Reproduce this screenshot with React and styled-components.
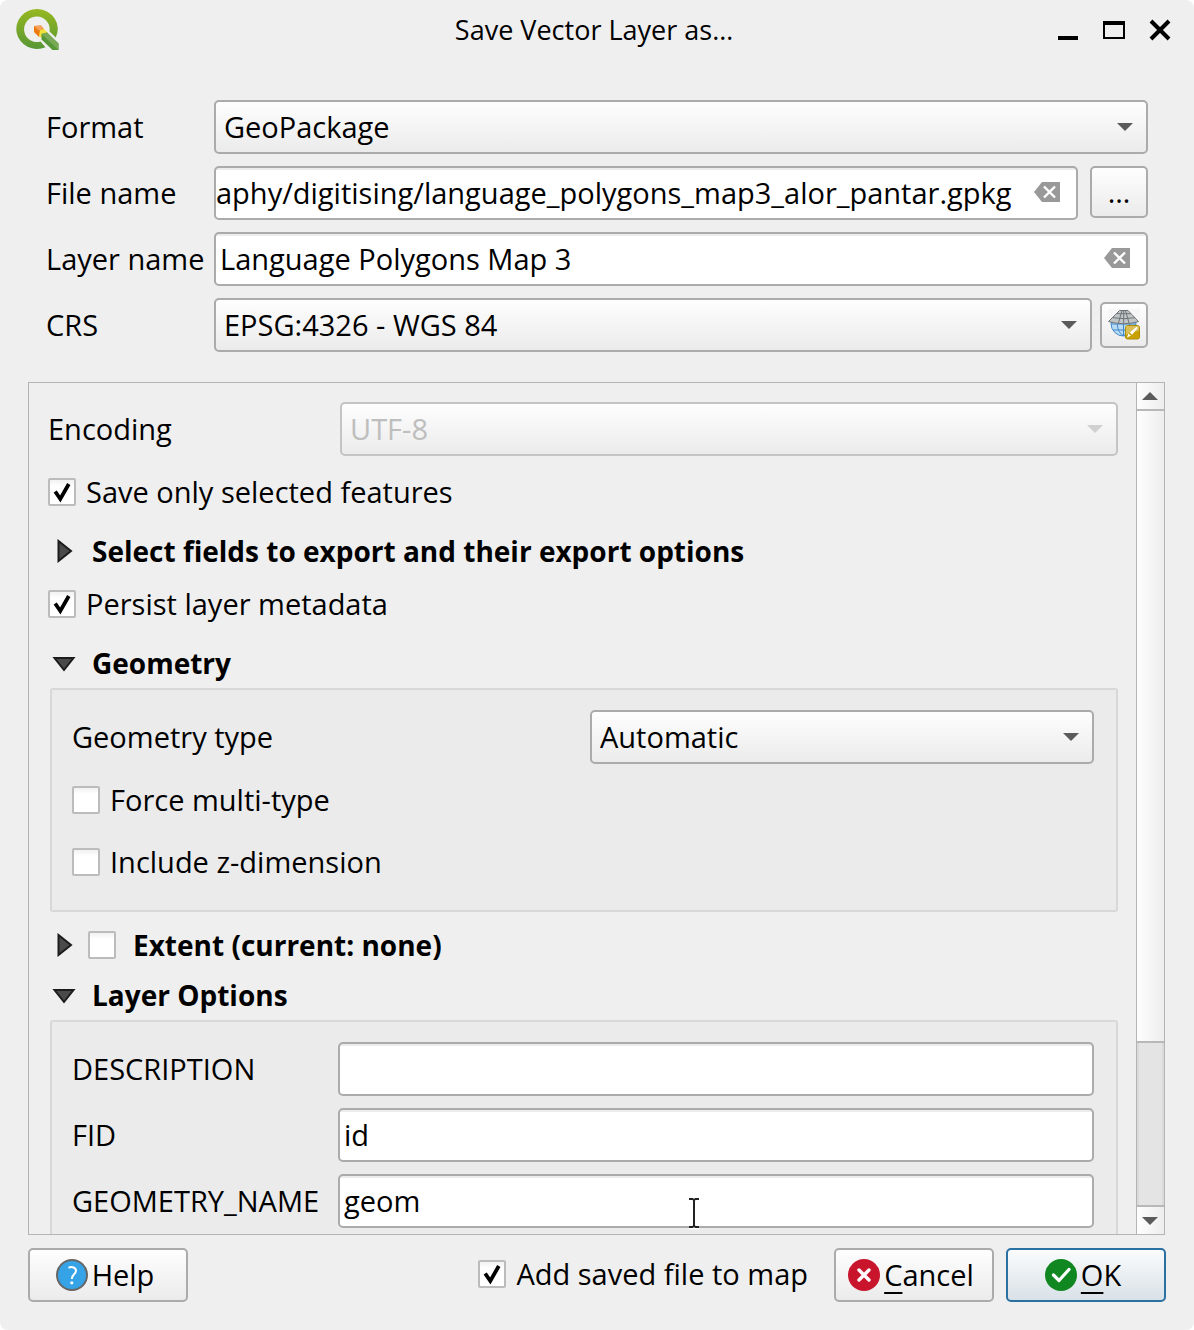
import React from 'react';
import styled, { createGlobalStyle, css } from 'styled-components';

const GlobalStyle = createGlobalStyle`
  *, *::before, *::after { box-sizing: border-box; }
  body { margin: 0; background: #fff; }
  body, button, input, select {
    font-family: "Open Sans", "Noto Sans", sans-serif;
    font-size: 29px;
    line-height: 40px;
    color: #000;
  }
`;

const raised = css`
  background: linear-gradient(#fefefe, #ebebeb);
  border: 2px solid #ababab;
  border-radius: 5px;
`;

const Window = styled.main`
  display: flex;
  flex-direction: column;
  height: 100vh;
  min-height: 600px;
  padding-bottom: 28px;
  background: #efefef;
  border-radius: 8px;
  overflow: hidden;
`;

const TitleBar = styled.header`
  display: grid;
  grid-template-columns: 1fr auto 1fr;
  align-items: center;
  height: 60px;
  padding: 0 22px 0 16px;
`;

const Title = styled.h1`
  margin: 0;
  font-size: 27px;
  font-weight: 400;
  line-height: 40px;
`;

const WindowButtons = styled.div`
  display: flex;
  justify-content: flex-end;
  gap: 22px;
`;

const WindowButton = styled.button`
  display: flex;
  width: 24px;
  height: 24px;
  padding: 0;
  border: 0;
  background: none;
`;

const TopForm = styled.section`
  display: grid;
  grid-template-columns: 156px 1fr;
  gap: 12px;
  padding: 40px 46px 30px;
`;

const Label = styled.label`
  align-self: center;
  white-space: nowrap;
`;

const FieldRow = styled.div`
  display: flex;
  align-items: ${p => p.$align || 'center'};
  gap: ${p => p.$gap}px;
`;

const SelectBox = styled.div`
  display: grid;
  flex: 1;
  align-items: center;
  color: ${p => (p.$disabled ? '#d0d0d0' : '#5b5b5b')};

  & > * { grid-area: 1 / 1; }
  & > svg { justify-self: end; margin-right: 15px; pointer-events: none; }
`;

const SelectControl = styled.select`
  ${raised}
  appearance: none;
  width: 100%;
  height: 54px;
  padding: 0 44px 0 8px;

  &:disabled { color: #bebebe; border-color: #c4c4c4; opacity: 1; }
`;

const InputBox = styled.div`
  display: flex;
  flex: 1;
  align-items: center;
  position: relative;
  height: 54px;
  padding: 0 ${p => (p.$clearable ? 14 : 4)}px 2px ${p => (p.$scrolled ? 0 : 4)}px;
  background: linear-gradient(#ececec 2px, #fff 2px);
  border: 2px solid #ababab;
  border-radius: 5px;
`;

const TextInput = styled.input`
  flex: 1;
  min-width: 0;
  height: 48px;
  padding: 0;
  border: 0;
  outline: 0;
  background: none;
`;

const ClearButton = styled.button`
  display: flex;
  padding: 0;
  border: 0;
  background: none;
`;

const BrowseButton = styled.button`
  ${raised}
  width: 58px;
  height: 52px;
  padding: 0;
`;

const CrsButton = styled.button`
  ${raised}
  display: flex;
  align-items: center;
  justify-content: center;
  width: 48px;
  height: 46px;
  padding: 0;
`;

const Panel = styled.section`
  display: flex;
  flex: 1;
  min-height: 0;
  margin: 0 29px 0 28px;
  border: 1px solid #b4b4b4;
`;

const PanelContent = styled.div`
  flex: 1;
  min-width: 0;
  padding: 19px 18px 0 19px;
  overflow: hidden;
`;

const OptionRow = styled.div`
  display: grid;
  grid-template-columns: ${p => p.$columns};
  align-items: center;
  margin-bottom: 8px;
`;

const CheckRow = styled.label`
  display: flex;
  align-items: center;
  gap: 10px;
  height: ${p => (p.$compact ? 40 : 56)}px;
  margin-bottom: ${p => (p.$compact ? 2 : 6)}px;
`;

const CheckFrame = styled.span`
  display: grid;
  flex: none;
  width: 28px;
  height: 28px;

  & > * { grid-area: 1 / 1; }
  & > svg { pointer-events: none; visibility: hidden; }
  & > input:checked + svg { visibility: visible; }
`;

const CheckInput = styled.input`
  appearance: none;
  width: 28px;
  height: 28px;
  margin: 0;
  background: linear-gradient(#f1f1f1, #fff 6px);
  border: 2px solid #bcbcbc;
  border-radius: 2px;
`;

const Heading = styled.div`
  display: flex;
  align-items: center;
  height: 50px;
  margin-top: ${p => (p.$spaced ? 8 : 0)}px;
`;

const Disclosure = styled.button`
  display: flex;
  margin-left: 4px;
  margin-right: ${p => (p.$tight ? 12 : 16)}px;
  padding: 0;
  border: 0;
  background: none;
`;

const HeadingText = styled.h2`
  margin: 0;
  font-size: 28px;
  font-weight: 700;
  line-height: 40px;
  white-space: nowrap;
`;

const HeadingLabel = styled.label`
  display: flex;
  align-items: center;
  gap: 17px;
`;

const Group = styled.div`
  margin-left: 2px;
  padding: 20px 22px 14px 20px;
  background: #ebebeb;
  border: 2px solid #d8d8d8;
  border-radius: 3px;
`;

const LayerFields = styled.div`
  display: grid;
  grid-template-columns: 254px 1fr;
  gap: 12px;
`;

const ScrollBar = styled.div`
  display: flex;
  flex-direction: column;
  flex: none;
  width: 28px;
  border-left: 1px solid #b4b4b4;
  background: #e4e4e4;
`;

const ScrollButton = styled.button`
  display: flex;
  flex: none;
  align-items: center;
  justify-content: center;
  height: ${p => (p.$down ? 29 : 28)}px;
  padding: 0 2px 0 0;
  border: 0;
  border-${p => (p.$down ? 'top' : 'bottom')}: 2px solid #b8b8b8;
  background: linear-gradient(90deg, #fefefe, #ededed);
  color: #5b5b5b;
`;

const ScrollTrack = styled.div`
  display: flex;
  flex-direction: column;
  flex: 1;
  border: solid #dadada;
  border-width: 0 2px;
`;

const ScrollThumb = styled.div`
  flex: 0 0 79.6%;
  margin: 0 -2px;
  background: linear-gradient(90deg, #fefefe, #ededed);
  border-bottom: 2px solid #b8b8b8;
`;

const Footer = styled.footer`
  display: flex;
  align-items: center;
  margin: 13px 28px 0;
`;

const FooterActions = styled.div`
  display: flex;
  align-items: center;
  gap: 12px;
  margin-left: auto;
`;

const ActionButton = styled.button`
  ${raised}
  display: flex;
  align-items: center;
  justify-content: center;
  gap: 4px;
  width: 160px;
  height: 54px;
  padding: 0 6px 0 0;
  ${p => p.$primary && css`
    border-color: #2a70a0;
    background: linear-gradient(#fafcfd, #d9e1e7);
  `}
`;

const Mnemonic = styled.span`
  text-decoration: underline;
  text-decoration-thickness: 2px;
  text-underline-offset: 6px;
`;

const FooterCheck = styled.div`
  margin-right: 14px;
`;

const TextCursor = styled.svg`
  position: absolute;
  left: 46%;
  top: 20px;
  pointer-events: none;
`;

const Arrow = ({ up }) => (
  <svg width="16" height="8" viewBox="0 0 16 8" aria-hidden="true">
    <path d={up ? 'M0 8L8 0L16 8Z' : 'M0 0H16L8 8Z'} fill="currentColor" />
  </svg>
);

const Triangle = ({ open }) => (
  <svg width="24" height="24" viewBox="0 0 24 24" aria-hidden="true">
    <path d={open ? 'M2.500 7H21.500L12 19Z' : 'M6.500 2V22L19 12Z'} fill="#4a4a4a" stroke="#1c1c1c" strokeWidth="2" />
  </svg>
);

const Check = ({ id, checked }) => (
  <CheckFrame>
    <CheckInput type="checkbox" id={id} defaultChecked={checked} />
    <svg width="28" height="28" viewBox="0 0 28 28" aria-hidden="true">
      <path d="M7.200 13.500L12.300 21L20.800 6" fill="none" stroke="#000" strokeWidth="3.800" />
    </svg>
  </CheckFrame>
);

const Select = ({ id, value, disabled }) => (
  <SelectBox $disabled={disabled}>
    <SelectControl id={id} disabled={disabled} defaultValue={value}>
      <option>{value}</option>
    </SelectControl>
    <Arrow />
  </SelectBox>
);

const Field = ({ id, value, clearable, scrolled, children }) => (
  <InputBox $clearable={clearable} $scrolled={scrolled}>
    <TextInput id={id} type="text" defaultValue={value} />
    {clearable && (
      <ClearButton type="button" aria-label="Clear text">
        <svg width="28" height="20" viewBox="0 0 28 20">
          <path d="M0 10L8 0H26V20H8Z" fill="#999" />
          <path d="M10 4.500L21 15.500M21 4.500L10 15.500" stroke="#fff" strokeWidth="2.400" />
        </svg>
      </ClearButton>
    )}
    {children}
  </InputBox>
);

const QgisLogo = () => (
  <svg width="44" height="44" viewBox="0 0 44 44" aria-hidden="true">
    <defs>
      <linearGradient id="ring" x1="0" y1="0" x2="0" y2="1">
        <stop offset="0" stopColor="#97b81f" />
        <stop offset="1" stopColor="#579736" />
      </linearGradient>
    </defs>
    <path fillRule="evenodd" fill="url(#ring)" d="M21.500 1A20.800 20 0 1 0 29.500 39.300L24.500 33.600A12.800 12.800 0 1 1 33.500 23.500L39.800 29.500A20.800 20 0 0 0 21.500 1Z" />
    <path d="M18 18L25 17.500L28 21.500L23 29L18 24Z" fill="#ee7913" />
    <path d="M18 18L25 17.500L28 20.500L23 22.500Z" fill="#f6a15c" />
    <path d="M24 22L28 21L32 25L27 31L23 28Z" fill="#f3e03b" />
    <path d="M25.500 26L31 24.500L42.500 35.500V42H36.500L25.500 31.500Z" fill="#579736" />
    <path d="M25.500 26L31 24.500L42.500 35.500V42Z" fill="#77a957" />
  </svg>
);

const GlobeIcon = () => (
  <svg width="32" height="32" viewBox="0 0 32 32" aria-hidden="true">
    <circle cx="15.500" cy="14.500" r="12.500" fill="#b9dcf6" stroke="#3f86c6" />
    <path d="M3 15H28M15.500 14V27M5 21H26M9.500 14C9 19 11 24 15 26.500M21.500 14C22 19 20 24 16 26.500" fill="none" stroke="#3f86c6" />
    <path d="M0 0H32V11H0Z" fill="#f6f6f6" />
    <path d="M11.500 1.500H20L30.500 12.500Q16 17 .5 12.500Z" fill="#c2c5c6" stroke="#6f7678" />
    <path d="M9 4.700H23M5 8.700Q16 10.700 27 8.700M14 1.500L10.500 14M17.500 1.500L21 14M15.700 1.500V14.500" fill="none" stroke="#6f7678" />
    <rect x="17.500" y="16.500" width="14" height="13.500" rx="2" fill="#c9a200" stroke="#b08d00" />
    <path d="M18 17H31V22Q24 22 18 26Z" fill="#d9bf55" />
    <path d="M19 28.500L20.500 24.500L22.800 26.800ZM21.800 23.500L28.500 17.800L29.800 19L24 25.700Z" fill="#fff" />
  </svg>
);

const HelpIcon = () => (
  <svg width="32" height="32" viewBox="0 0 32 32" aria-hidden="true">
    <circle cx="16" cy="16" r="15" fill="#36a3e6" stroke="#666" strokeWidth="2" />
    <path d="M12.500 8.700C16 7.300 20 8.500 20 11.800C20 15.500 15.800 15.300 15.800 20" fill="none" stroke="#fff" strokeWidth="2" />
    <circle cx="15.800" cy="23.800" r="1.600" fill="#fff" />
  </svg>
);

const CancelIcon = () => (
  <svg width="32" height="32" viewBox="0 0 32 32" aria-hidden="true">
    <circle cx="16" cy="16" r="16" fill="#c8152c" />
    <path d="M11 11L21 21M21 11L11 21" stroke="#fff" strokeWidth="3.400" strokeLinecap="round" />
  </svg>
);

const OkIcon = () => (
  <svg width="32" height="32" viewBox="0 0 32 32" aria-hidden="true">
    <circle cx="16" cy="16" r="16" fill="#118722" />
    <path d="M8.500 16L14 21.500L24 10.500" fill="none" stroke="#fff" strokeWidth="3.200" strokeLinecap="round" strokeLinejoin="round" />
  </svg>
);

export default function App() {
  return (
    <>
      <GlobalStyle />
      <Window>
        <TitleBar>
          <QgisLogo />
          <Title>Save Vector Layer as…</Title>
          <WindowButtons>
            <WindowButton type="button" aria-label="Minimize">
              <svg width="24" height="24" viewBox="0 0 24 24"><path d="M2 18H22V22H2Z" /></svg>
            </WindowButton>
            <WindowButton type="button" aria-label="Maximize">
              <svg width="24" height="24" viewBox="0 0 24 24"><path fillRule="evenodd" d="M1 3H23V21H1ZM3 7V19H21V7Z" /></svg>
            </WindowButton>
            <WindowButton type="button" aria-label="Close">
              <svg width="24" height="24" viewBox="0 0 24 24"><path d="M3 3L21 21M21 3L3 21" stroke="#000" strokeWidth="4" /></svg>
            </WindowButton>
          </WindowButtons>
        </TitleBar>

        <TopForm>
          <Label htmlFor="format">Format</Label>
          <Select id="format" value="GeoPackage" />

          <Label htmlFor="file">File name</Label>
          <FieldRow $gap={12} $align="flex-start">
            <Field id="file" value="aphy/digitising/language_polygons_map3_alor_pantar.gpkg" clearable scrolled />
            <BrowseButton type="button" aria-label="Browse">…</BrowseButton>
          </FieldRow>

          <Label htmlFor="layer">Layer name</Label>
          <Field id="layer" value="Language Polygons Map 3" clearable />

          <Label htmlFor="crs">CRS</Label>
          <FieldRow $gap={8}>
            <Select id="crs" value="EPSG:4326 - WGS 84" />
            <CrsButton type="button" aria-label="Select CRS"><GlobeIcon /></CrsButton>
          </FieldRow>
        </TopForm>

        <Panel>
          <PanelContent>
            <OptionRow $columns="292px 1fr">
              <Label htmlFor="encoding">Encoding</Label>
              <Select id="encoding" value="UTF-8" disabled />
            </OptionRow>

            <CheckRow><Check checked />Save only selected features</CheckRow>

            <Heading>
              <Disclosure type="button" aria-label="Expand fields"><Triangle /></Disclosure>
              <HeadingText>Select fields to export and their export options</HeadingText>
            </Heading>

            <CheckRow><Check checked />Persist layer metadata</CheckRow>

            <Heading>
              <Disclosure type="button" aria-label="Collapse geometry"><Triangle open /></Disclosure>
              <HeadingText>Geometry</HeadingText>
            </Heading>
            <Group>
              <OptionRow $columns="518px 1fr">
                <Label htmlFor="geomtype">Geometry type</Label>
                <Select id="geomtype" value="Automatic" />
              </OptionRow>
              <CheckRow><Check />Force multi-type</CheckRow>
              <CheckRow><Check />Include z-dimension</CheckRow>
            </Group>

            <Heading $spaced>
              <Disclosure type="button" $tight aria-label="Expand extent"><Triangle /></Disclosure>
              <HeadingLabel>
                <Check />
                <HeadingText>Extent (current: none)</HeadingText>
              </HeadingLabel>
            </Heading>

            <Heading>
              <Disclosure type="button" aria-label="Collapse layer options"><Triangle open /></Disclosure>
              <HeadingText>Layer Options</HeadingText>
            </Heading>
            <Group>
              <LayerFields>
                <Label htmlFor="description">DESCRIPTION</Label>
                <Field id="description" value="" />
                <Label htmlFor="fid">FID</Label>
                <Field id="fid" value="id" />
                <Label htmlFor="geometry">GEOMETRY_NAME</Label>
                <Field id="geometry" value="geom">
                  <TextCursor width="16" height="34" viewBox="0 0 16 34" aria-hidden="true">
                    <path d="M3 3H6.500L8 4L9.500 3H13M3 31H6.500L8 30L9.500 31H13M8 4V30" fill="none" stroke="#fff" strokeWidth="5" />
                    <path d="M3 3H6.500L8 4L9.500 3H13M3 31H6.500L8 30L9.500 31H13M8 4V30" fill="none" stroke="#222" strokeWidth="2" />
                  </TextCursor>
                </Field>
              </LayerFields>
            </Group>
          </PanelContent>

          <ScrollBar>
            <ScrollButton type="button" aria-label="Scroll up"><Arrow up /></ScrollButton>
            <ScrollTrack><ScrollThumb /></ScrollTrack>
            <ScrollButton type="button" $down aria-label="Scroll down"><Arrow /></ScrollButton>
          </ScrollBar>
        </Panel>

        <Footer>
          <ActionButton type="button"><HelpIcon />Help</ActionButton>
          <FooterActions>
            <FooterCheck>
              <CheckRow $compact><Check checked />Add saved file to map</CheckRow>
            </FooterCheck>
            <ActionButton type="button"><CancelIcon /><span><Mnemonic>C</Mnemonic>ancel</span></ActionButton>
            <ActionButton type="button" $primary><OkIcon /><span><Mnemonic>O</Mnemonic>K</span></ActionButton>
          </FooterActions>
        </Footer>
      </Window>
    </>
  );
}
